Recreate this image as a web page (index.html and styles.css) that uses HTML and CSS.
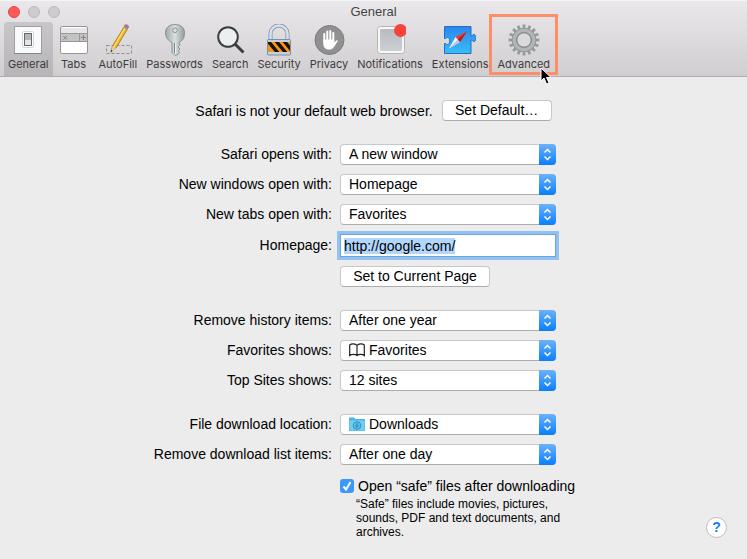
FILE: index.html
```html
<!DOCTYPE html>
<html lang="en">
<head>
  <meta charset="UTF-8">
  <meta name="viewport" content="width=device-width, initial-scale=1.0">
  <title>General</title>
  <link rel="stylesheet" href="styles.css">
</head>
<body>
  <header class="titlebar">
    <div class="caption">
      <div class="lights">
        <button class="light close" aria-label="Close"></button>
        <button class="light" aria-label="Minimize"></button>
        <button class="light" aria-label="Zoom"></button>
      </div>
      <h1>General</h1>
    </div>
    <nav class="toolbar">
      <button class="tool selected">
        <svg class="icon" viewBox="0 0 32 32">
          <rect x="2.5" y="2.5" width="27" height="27" fill="#f8fafb" stroke="#a0a0a0"/>
          <path d="M2.5 29.5H29.5" stroke="#858585"/>
          <rect x="10.5" y="7.5" width="11" height="16" rx="1.5" fill="#fff" stroke="#d5d8da"/>
          <rect x="12.5" y="9.5" width="7" height="12" fill="#e4e6e8" stroke="#66696c"/>
          <path d="M13 10h6v6h-6z" fill="#b4b7bb"/>
        </svg>
        <span>General</span>
      </button>
      <button class="tool">
        <svg class="icon" viewBox="0 0 32 32">
          <rect x="2.5" y="2.5" width="27" height="27" rx="1.5" fill="#fff" stroke="#969696"/>
          <path d="M3 4h26v6H3z" fill="#e9e5e8"/>
          <path d="M3 10h26v8H3z" fill="#c3c3c3"/>
          <path d="M3 9.5h26M3 17.5h26M21.5 10v8" stroke="#999"/>
          <path d="M5.5 12l3.5 3.5M9 12l-3.5 3.5M23 13.5h5M25.5 11v5" stroke="#858585" fill="none"/>
        </svg>
        <span>Tabs</span>
      </button>
      <button class="tool">
        <svg class="icon" viewBox="0 0 32 32">
          <rect x="4.5" y="21.5" width="25" height="8" fill="none" stroke="#8f8f8f" stroke-dasharray="3 2"/>
          <path d="M9 27L10.5 22 22 3l3.5 2L14 24z" fill="#f2b51d" stroke="#8d6b20" stroke-width=".7"/>
          <path d="M12 23L23 4" stroke="#ffe476" stroke-width="1.2"/>
          <path d="M10.5 22l3.5 2-5 4z" fill="#e8cb9b"/>
          <path d="M9.2 26l1.5 1L8.5 28.5z" fill="#222"/>
          <path d="M21.5 3.5l1-2 4 2-1 2.2z" fill="#7da0a3"/>
          <path d="M22.5 1.5C24 0 27 1 26.5 3.500z" fill="#e77b9c" stroke="#a84f69" stroke-width=".7"/>
        </svg>
        <span>AutoFill</span>
      </button>
      <button class="tool">
        <svg class="icon" viewBox="0 0 32 32">
          <defs>
            <linearGradient id="metal" x2="1">
              <stop stop-color="#9fa7a9"/><stop offset=".5" stop-color="#d7dfdf"/><stop offset="1" stop-color="#929a9c"/>
            </linearGradient>
          </defs>
          <path fill-rule="evenodd" d="M16 .5c-6 0-9.500 3.500-9.500 8 0 5 2.500 8 6.500 10v10l3 3 3-1 1.500-2-1-2 1.500-1.500-2-2 2-2-1-2.500c4-2 5.500-5 5.500-10 0-4.500-3.500-8-9.500-8zm0 3.500a2.300 2.300 0 1 1 0 4.600A2.300 2.300 0 0 1 16 4z" fill="url(#metal)" stroke="#7c8588" stroke-width=".8"/>
          <path d="M15.5 19v10" stroke="#788184"/>
          <path d="M16.5 19v10" stroke="#eef2f2"/>
        </svg>
        <span>Passwords</span>
      </button>
      <button class="tool">
        <svg class="icon" viewBox="0 0 32 32">
          <circle cx="14" cy="13" r="9.800" fill="#eceff0" stroke="#3d3d3d" stroke-width="2"/>
          <path d="M21 20l8.5 8.5" stroke="#3d3d3d" stroke-width="3"/>
        </svg>
        <span>Search</span>
      </button>
      <button class="tool">
        <svg class="icon" viewBox="0 0 32 32">
          <defs><clipPath id="band"><path d="M5 18h22v10H5z"/></clipPath></defs>
          <path d="M7.500 16v-6a8.500 8.500 0 0 1 17 0v6" fill="none" stroke="#8391a4" stroke-width="4"/>
          <path d="M7.500 16v-6a8.500 8.500 0 0 1 17 0v6" fill="none" stroke="#d5e1ee" stroke-width="2.500"/>
          <rect x="4.500" y="15.500" width="23" height="15.500" rx="1" fill="#c3d0df" stroke="#7d8ea6"/>
          <path d="M5 18h22v10H5z" fill="#f99616"/>
          <path clip-path="url(#band)" d="M5 17l10 12M13 17l10 12M21 17l10 12" stroke="#17130d" stroke-width="3.500"/>
        </svg>
        <span>Security</span>
      </button>
      <button class="tool">
        <svg class="icon" viewBox="0 0 32 32">
          <circle cx="16.500" cy="16" r="14.500" fill="#909090" stroke="#7d7d7d"/>
          <path d="M11.300 10v8M14.300 7.500v11M17.300 7v11M20.300 9v9" fill="none" stroke="#fff" stroke-width="2" stroke-linecap="round"/>
          <path d="M10.300 15.500h11v3l2-2c1-.7 1.800.2 1.300 1L21 23c-1.500 2-3 2.500-4.500 2.500-4 0-5.700-2-6.200-5z" fill="#fff"/>
        </svg>
        <span>Privacy</span>
      </button>
      <button class="tool">
        <svg class="icon" viewBox="0 0 32 32">
          <defs>
            <linearGradient id="pane" x2="0" y2="1"><stop stop-color="#b8bcc1"/><stop offset="1" stop-color="#ccd0d4"/></linearGradient>
          </defs>
          <rect x="3.500" y="2.500" width="27" height="27" rx="3" fill="#f7f7f5" stroke="#b5b5b3"/>
          <rect x="6" y="5" width="22" height="22" rx="1" fill="url(#pane)"/>
          <circle cx="26.500" cy="6.500" r="6.500" fill="#f9423a"/>
        </svg>
        <span>Notifications</span>
      </button>
      <button class="tool">
        <svg class="icon" viewBox="0 0 32 32">
          <defs>
            <linearGradient id="sky" x2="0" y2="1"><stop stop-color="#2a86ef"/><stop offset="1" stop-color="#38bdf8"/></linearGradient>
          </defs>
          <path d="M.5 2.500h26.500v9.500c1.500 0 1.500-1.500 3-1.500 2.500 0 2.500 7 0 7-1.500 0-1.500-1.500-3-1.500v13.500H.5v-10c1.500-.5 1.500 1 3 1 3 0 3-7 0-7-1.500 0-1.500 1.500-3 1z" fill="url(#sky)" stroke="#2470bd"/>
          <path d="M23 7.500L11.500 13l4.500 5z" fill="#ef3a2f"/>
          <path d="M5 24.500L11.500 13l4.500 5z" fill="#f5f7f8"/>
          <path d="M5 24.500L16 18l-2.300-2.500z" fill="#b9cad5"/>
          <path d="M23 7.500L16 18l-2.300-2.500z" fill="#b81d20"/>
        </svg>
        <span>Extensions</span>
      </button>
      <button class="tool">
        <svg class="icon" viewBox="0 0 32 32">
          <g stroke="#969b9c" stroke-width="2.800">
            <path d="M16 .5v31M.5 16h31"/>
            <path d="M16 .5v31M.5 16h31" transform="rotate(22.500 16 16)"/>
            <path d="M16 .5v31M.5 16h31" transform="rotate(45 16 16)"/>
            <path d="M16 .5v31M.5 16h31" transform="rotate(67.500 16 16)"/>
          </g>
          <circle cx="16" cy="16" r="9.700" fill="#dad9dc" stroke="#8b9192" stroke-width="5"/>
          <circle cx="16" cy="16" r="9.700" fill="none" stroke="#b0b5b6" stroke-width="3.500"/>
          <circle cx="16" cy="16" r="7.200" fill="none" stroke="#7f8586"/>
        </svg>
        <span>Advanced</span>
        <span class="highlight"></span>
        <svg class="pointer" viewBox="0 0 12 18">
          <path d="M1 1v13l3-3 2.500 6 2.500-1-2.500-5.500H11z" fill="#000" stroke="#fff"/>
        </svg>
      </button>
    </nav>
  </header>

  <main>
    <div class="default-row">
      <span>Safari is not your default web browser.</span>
      <button class="push wide">Set Default…</button>
    </div>

    <form class="settings">
      <label for="opens">Safari opens with:</label>
      <div class="popup">
        <select id="opens"><option>A new window</option></select>
        <svg class="arrows" viewBox="0 0 17 21"><path d="M5.500 8.500l3-3 3 3M5.500 12.500l3 3 3-3"/></svg>
      </div>

      <label for="windows">New windows open with:</label>
      <div class="popup">
        <select id="windows"><option>Homepage</option></select>
        <svg class="arrows" viewBox="0 0 17 21"><path d="M5.500 8.500l3-3 3 3M5.500 12.500l3 3 3-3"/></svg>
      </div>

      <label for="tabs">New tabs open with:</label>
      <div class="popup">
        <select id="tabs"><option>Favorites</option></select>
        <svg class="arrows" viewBox="0 0 17 21"><path d="M5.500 8.500l3-3 3 3M5.500 12.500l3 3 3-3"/></svg>
      </div>

      <label for="homepage">Homepage:</label>
      <input class="field" id="homepage" type="text" value="http://google.com/">

      <button class="push current" type="button">Set to Current Page</button>

      <label class="group" for="history">Remove history items:</label>
      <div class="popup group">
        <select id="history"><option>After one year</option></select>
        <svg class="arrows" viewBox="0 0 17 21"><path d="M5.500 8.500l3-3 3 3M5.500 12.500l3 3 3-3"/></svg>
      </div>

      <label for="favorites">Favorites shows:</label>
      <div class="popup with-icon">
        <svg class="glyph" viewBox="0 0 16 16">
          <path d="M8 3.500C6.500 1.500 2.500 1.500 .7 3v10.500c1.800-1.500 5.800-1.500 7.300 0 1.500-1.500 5.500-1.500 7.300 0V3C13.500 1.500 9.500 1.500 8 3.500zM8 3.500V13.500" fill="none" stroke="#222" stroke-width="1.200"/>
        </svg>
        <select id="favorites"><option>Favorites</option></select>
        <svg class="arrows" viewBox="0 0 17 21"><path d="M5.500 8.500l3-3 3 3M5.500 12.500l3 3 3-3"/></svg>
      </div>

      <label for="topsites">Top Sites shows:</label>
      <div class="popup">
        <select id="topsites"><option>12 sites</option></select>
        <svg class="arrows" viewBox="0 0 17 21"><path d="M5.500 8.500l3-3 3 3M5.500 12.500l3 3 3-3"/></svg>
      </div>

      <label class="group" for="location">File download location:</label>
      <div class="popup with-icon group">
        <svg class="glyph" viewBox="0 0 16 16">
          <path d="M0 1.500h5.500l1 1.500H16v12H0z" fill="#4fb4e2"/>
          <path d="M.5 4.500h15v10H.5z" fill="#71cdf4"/>
          <circle cx="8" cy="9.500" r="3.800" fill="#5fbfe9" stroke="#2b92c6"/>
          <path d="M8 7v4M6.200 9.500L8 11.300l1.800-1.800" fill="none" stroke="#2488bb"/>
        </svg>
        <select id="location"><option>Downloads</option></select>
        <svg class="arrows" viewBox="0 0 17 21"><path d="M5.500 8.500l3-3 3 3M5.500 12.500l3 3 3-3"/></svg>
      </div>

      <label for="list">Remove download list items:</label>
      <div class="popup">
        <select id="list"><option>After one day</option></select>
        <svg class="arrows" viewBox="0 0 17 21"><path d="M5.500 8.500l3-3 3 3M5.500 12.500l3 3 3-3"/></svg>
      </div>

      <div class="safe">
        <span class="tick">
          <input id="safe" type="checkbox" checked>
          <svg viewBox="0 0 14 14"><path d="M3.500 7.500l2.500 3 4.500-7.500"/></svg>
        </span>
        <label for="safe">Open “safe” files after downloading</label>
        <p>“Safe” files include movies, pictures, sounds, PDF and text documents, and archives.</p>
      </div>
    </form>
    <button class="help" aria-label="Help">?</button>
  </main>

  <script>
    const homepage = document.getElementById("homepage");
    homepage.focus();
    homepage.select();
  </script>
</body>
</html>
```

FILE: styles.css
```css
* {
  box-sizing: border-box;
}
body {
  margin: 0;
  min-height: 100vh;
  display: flex;
  flex-direction: column;
  background: #ececec;
  color: #000;
  font: 14px/20px "Liberation Sans", Arial, sans-serif;
}
button, select, input {
  font: inherit;
  color: inherit;
  margin: 0;
}
.titlebar {
  height: 77px;
  background: linear-gradient(#eae8ea, #d0ced0);
  border-top: 1px solid #f5f4f5;
  border-bottom: 1px solid #b0aeb0;
}
.caption {
  display: grid;
  grid-template-columns: 1fr auto 1fr;
  align-items: center;
  height: 21px;
  padding: 0 8px;
}
.caption h1 {
  margin: 0;
  font-size: 13px;
  font-weight: normal;
  color: #444;
}
.lights {
  display: flex;
  gap: 8px;
}
.light {
  width: 12px;
  height: 12px;
  padding: 0;
  border: 1px solid #bcbabc;
  border-radius: 50%;
  background: #cecdce;
}
.light.close {
  background: #fc5b57;
  border-color: #e2463f;
}
.toolbar {
  display: flex;
  gap: 1px;
  padding: 0 4px;
}
.tool {
  position: relative;
  display: flex;
  flex-direction: column;
  align-items: center;
  height: 54px;
  padding: 2px 4px 0;
  border: 0;
  border-radius: 4px 4px 0 0;
  background: none;
  color: #3c3c3c;
  font-family: Inter, "Liberation Sans", sans-serif;
  font-size: 11px;
  line-height: 16px;
}
.tool.selected {
  background: linear-gradient(#c8c6c8, #b7b5b7);
}
.icon {
  width: 32px;
  height: 32px;
}
.highlight {
  position: absolute;
  inset: -8px -4px 1px;
  border: 3px solid #fd8e67;
}
.pointer {
  position: absolute;
  right: 2px;
  bottom: -9px;
  width: 12px;
  height: 18px;
}
main {
  position: relative;
  flex: 1;
  padding-top: 23px;
}
.default-row {
  display: flex;
  justify-content: center;
  align-items: center;
  gap: 9px;
}
.push {
  height: 21px;
  padding: 0 8px;
  border: 1px solid #c8c8c8;
  border-bottom-color: #acacac;
  border-radius: 4px;
  background: #fff;
  line-height: 19px;
  white-space: nowrap;
}
.push.wide {
  width: 110px;
}
.settings {
  display: grid;
  grid-template-columns: 4fr 5fr;
  row-gap: 9px;
  align-items: center;
  justify-items: start;
  margin-top: 23px;
}
.settings > label {
  justify-self: end;
  line-height: 21px;
}
.settings > :not(label) {
  grid-column: 2;
  margin-left: 8px;
}
.settings > .group {
  margin-top: 14px;
}
.popup {
  position: relative;
  width: 216px;
  height: 21px;
}
.popup select {
  appearance: none;
  width: 100%;
  height: 100%;
  padding: 0 24px 0 8px;
  border: 1px solid #c8c8c8;
  border-bottom-color: #acacac;
  border-radius: 4px;
  background: #fff;
  line-height: 19px;
}
.popup.with-icon select {
  padding-left: 28px;
}
.arrows {
  position: absolute;
  top: 0;
  right: 0;
  width: 17px;
  height: 21px;
  border-radius: 0 4px 4px 0;
  background: linear-gradient(#6bb2fa, #097efe);
  fill: none;
  stroke: #fff;
  stroke-width: 1.5;
  pointer-events: none;
}
.glyph {
  position: absolute;
  left: 9px;
  top: 2px;
  width: 16px;
  height: 16px;
}
.field {
  width: 216px;
  height: 23px;
  padding: 0 3px;
  border: 1px solid #6aa5e0;
  background: #fff;
  outline: 3px solid #93c1f1;
  outline-offset: 0;
}
.field::selection {
  background: #b2d7fe;
  color: #000;
}
.current {
  width: 150px;
}
.safe {
  display: grid;
  grid-template-columns: 14px 1fr;
  column-gap: 4px;
  align-items: center;
  margin-top: 2px;
}
.tick {
  position: relative;
  height: 14px;
}
.tick input {
  display: block;
  appearance: none;
  width: 14px;
  height: 14px;
  border-radius: 3px;
  background: #3b99fc;
}
.tick svg {
  position: absolute;
  inset: 0;
  fill: none;
  stroke: #fff;
  stroke-width: 2;
  pointer-events: none;
}
.safe p {
  grid-column: 1 / -1;
  max-width: 224px;
  margin: 0;
  padding: 1px 0 0 16px;
  font-size: 12px;
  line-height: 14px;
}
.help {
  position: absolute;
  right: 20px;
  bottom: 21px;
  width: 21px;
  height: 21px;
  padding: 0;
  border: 1px solid #bdbdbd;
  border-radius: 50%;
  background: #fff;
  color: #157efb;
  font-weight: bold;
  line-height: 19px;
}
```
